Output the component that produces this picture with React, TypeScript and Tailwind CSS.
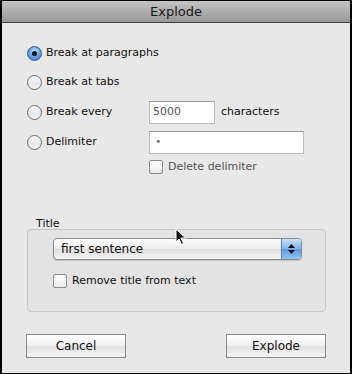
import React from 'react';

function Radio({ checked }: { checked?: boolean }) {
  if (checked) {
    return (
      <span className="w-[15px] h-[15px] rounded-full border border-[#3d5f93] bg-[radial-gradient(circle_at_50%_35%,#d6ecff_0%,#6aa6e8_45%,#2a6fcf_100%)] flex items-center justify-center shrink-0">
        <span className="w-[5px] h-[5px] rounded-full bg-[#111]" />
      </span>
    );
  }
  return (
    <span className="w-[15px] h-[15px] rounded-full border border-[#6b6b6b] bg-[linear-gradient(#ffffff,#e6e6e6_60%,#f6f6f6)] shrink-0" />
  );
}

function Check() {
  return <span className="w-[14px] h-[14px] rounded-[2px] border border-[#8a8a8a] bg-[linear-gradient(#ffffff,#ececec)] shrink-0" />;
}

export default function App() {
  return (
    <div className="w-[352px] h-[374px] bg-black p-[1px] pl-[2px] pr-[2px]" style={{ fontFamily: '"DejaVu Sans", sans-serif' }}>
      <div className="w-full h-full bg-[#e8e8e8] flex flex-col text-[11px] text-[#111]">
        {/* Title bar */}
        <div className="h-[22px] bg-[linear-gradient(#c4c4c4,#979797)] border-b border-[#404040] flex items-center justify-center text-[13px] text-[#1a1a1a] shrink-0">
          Explode
        </div>

        <div className="flex flex-col pl-[25px] pt-[22px]">
          <div className="flex items-center gap-[4px] h-[16px]">
            <Radio checked />
            <span>Break at paragraphs</span>
          </div>
          <div className="flex items-center gap-[4px] h-[16px] mt-[13px]">
            <Radio />
            <span>Break at tabs</span>
          </div>
          <div className="flex items-center h-[24px] mt-[10px]">
            <div className="flex items-center gap-[4px] w-[122px]">
              <Radio />
              <span>Break every</span>
            </div>
            <div className="w-[66px] h-[23px] bg-white border border-[#bdbdbd] border-t-[#9a9a9a] flex items-center px-[3px] text-[#555]">5000</div>
            <span className="ml-[6px]">characters</span>
          </div>
          <div className="flex items-center h-[23px] mt-[7px]">
            <div className="flex items-center gap-[4px] w-[122px]">
              <Radio />
              <span>Delimiter</span>
            </div>
            <div className="w-[155px] h-[23px] bg-white border border-[#bdbdbd] border-t-[#9a9a9a] flex items-center px-[5px] text-[#777]">•</div>
          </div>
          <div className="flex items-center gap-[5px] ml-[122px] mt-[5px] text-[#555]">
            <Check />
            <span>Delete delimiter</span>
          </div>
        </div>

        {/* Title group */}
        <div className="ml-[34px] mt-[42px] text-[11px] leading-[12px]">Title</div>
        <div className="relative ml-[25px] mt-[-1px] w-[299px] h-[83px] border border-[#c6c6c6] rounded-[4px] bg-[#e3e3e3] flex flex-col pl-[25px] pt-[8px]">
          <div className="w-[249px] h-[22px] rounded-[4px] border border-[#8c8c8c] bg-[linear-gradient(#ffffff,#ececec_50%,#dedede_52%,#f4f4f4)] flex items-center shadow-[0_1px_1px_rgba(0,0,0,0.15)]">
            <span className="flex-1 pl-[7px] text-[12px]">first sentence</span>
            <span className="w-[20px] h-[20px] rounded-r-[3px] border-l border-[#5a7eb8] bg-[linear-gradient(#c6e1fb,#7fb3ea_50%,#5b9ce3_52%,#8ec3f4)] flex flex-col items-center justify-center gap-[2px]">
              <svg width="7" height="4" viewBox="0 0 7 4"><path d="M3.5 0L7 4H0z" fill="#111" /></svg>
              <svg width="7" height="4" viewBox="0 0 7 4"><path d="M0 0h7L3.5 4z" fill="#111" /></svg>
            </span>
          </div>
          <div className="flex items-center gap-[5px] mt-[13px]">
            <Check />
            <span>Remove title from text</span>
          </div>
          {/* mouse pointer */}
          <svg className="absolute left-[147px] top-[-2px]" width="12" height="18" viewBox="0 0 12 18">
            <path d="M1 1L1 14L4 11L6.5 16.5L8.5 15.5L6 10L10.5 10Z" fill="#111" stroke="#fff" strokeWidth="1" />
          </svg>
        </div>

        {/* Buttons */}
        <div className="flex justify-between pl-[24px] pr-[24px] mt-[22px]">
          <button className="w-[100px] h-[24px] border border-[#8a8a8a] bg-[linear-gradient(#ffffff,#f0f0f0_50%,#e2e2e2_52%,#f6f6f6)] text-[12px] text-[#111]">Cancel</button>
          <button className="w-[100px] h-[24px] border border-[#8a8a8a] bg-[linear-gradient(#ffffff,#f0f0f0_50%,#e2e2e2_52%,#f6f6f6)] text-[12px] text-[#111]">Explode</button>
        </div>
      </div>
    </div>
  );
}
